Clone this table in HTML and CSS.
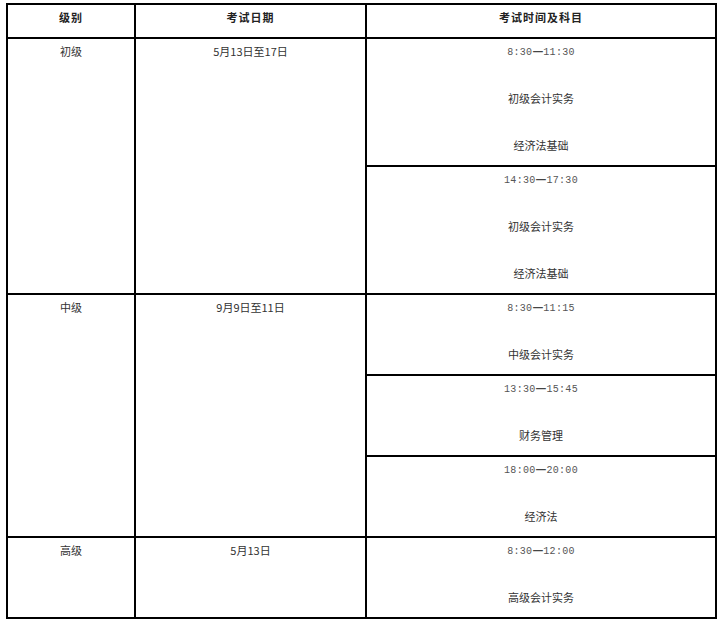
FILE: index.html
```html
<!DOCTYPE html>
<html lang="zh-CN">
<head>
<meta charset="utf-8">
<title>考试时间安排</title>
<link rel="stylesheet" href="styles.css">
</head>
<body>
<table class="schedule">
  <colgroup>
    <col class="c-level">
    <col class="c-date">
    <col class="c-time">
  </colgroup>
  <thead>
    <tr>
      <th>级别</th>
      <th>考试日期</th>
      <th>考试时间及科目</th>
    </tr>
  </thead>
  <tbody>
    <tr>
      <td rowspan="2"><p>初级</p></td>
      <td rowspan="2"><p>5月13日至17日</p></td>
      <td><p class="time">8:30<span class="dash">—</span>11:30</p><p>初级会计实务</p><p>经济法基础</p></td>
    </tr>
    <tr>
      <td><p class="time">14:30<span class="dash">—</span>17:30</p><p>初级会计实务</p><p>经济法基础</p></td>
    </tr>
    <tr>
      <td rowspan="3"><p>中级</p></td>
      <td rowspan="3"><p>9月9日至11日</p></td>
      <td><p class="time">8:30<span class="dash">—</span>11:15</p><p>中级会计实务</p></td>
    </tr>
    <tr>
      <td><p class="time">13:30<span class="dash">—</span>15:45</p><p>财务管理</p></td>
    </tr>
    <tr>
      <td><p class="time">18:00<span class="dash">—</span>20:00</p><p>经济法</p></td>
    </tr>
    <tr>
      <td><p>高级</p></td>
      <td><p>5月13日</p></td>
      <td><p class="time">8:30<span class="dash">—</span>12:00</p><p>高级会计实务</p></td>
    </tr>
  </tbody>
</table>
</body>
</html>
```

FILE: styles.css
```css
html, body {
  margin: 0;
  background: #fff;
}
body {
  padding: 3px 0 0 6px;
  font-family: "Noto Sans CJK SC", "Liberation Sans", sans-serif;
  font-size: 11px;
  color: #333;
}
.schedule {
  border-collapse: collapse;
  table-layout: fixed;
  width: 711px;
}
.c-level { width: 128px; }
.c-date { width: 231px; }
.c-time { width: 350px; }
.schedule th,
.schedule td {
  border: 2px solid #000;
  padding: 3px 0 11px;
  text-align: center;
  vertical-align: top;
  line-height: 18px;
}
.schedule th {
  font-weight: bold;
  color: #222;
  letter-spacing: 1px;
}
.schedule p {
  margin: 0;
  height: 18px;
  line-height: 18px;
}
.schedule p + p {
  margin-top: 29px;
}
.schedule p.time {
  height: 16px;
  padding-top: 2px;
  font-family: "Liberation Mono", monospace;
  font-size: 10px;
  color: #555;
  letter-spacing: 0.3px;
}
.dash {
  font-family: "Noto Sans CJK SC", sans-serif;
  font-size: 12px;
  font-weight: bold;
  line-height: 0;
  letter-spacing: 0;
  color: #444;
}
```
